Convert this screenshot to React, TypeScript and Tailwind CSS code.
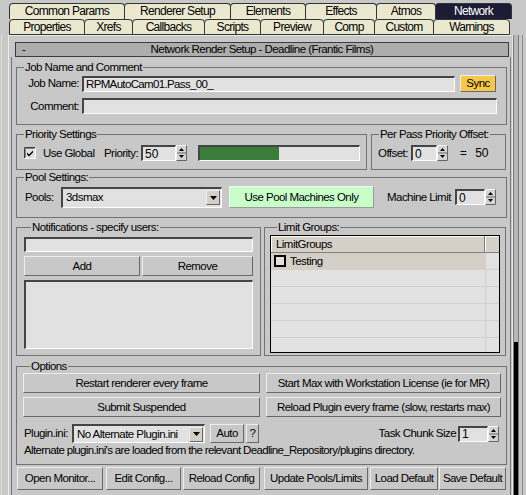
import React from "react";

const sunken =
  "bg-[#e1e1e1] border-t-2 border-l-2 border-t-[#454545] border-l-[#454545] border-b border-r border-b-white border-r-white";
const raised =
  "border border-t-[#ededed] border-l-[#ededed] border-b-[#686868] border-r-[#686868]";

const tabsTop = [
  { label: "Common Params", w: "w-[116px]" },
  { label: "Renderer Setup", w: "w-[107px]" },
  { label: "Elements", w: "w-[76px]" },
  { label: "Effects", w: "w-[72px]" },
  { label: "Atmos", w: "w-[60px]" },
  { label: "Network", w: "w-[77px]", active: true },
];

const tabsBottom = [
  { label: "Properties", w: "w-[76px]" },
  { label: "Xrefs", w: "w-[49px]" },
  { label: "Callbacks", w: "w-[73px]" },
  { label: "Scripts", w: "w-[57px]" },
  { label: "Preview", w: "w-[64px]" },
  { label: "Comp", w: "w-[52px]" },
  { label: "Custom", w: "w-[60px]" },
  { label: "Warnings", w: "w-[77px]" },
];

type TabProps = { label: string; w: string; active?: boolean; bottom?: boolean };

function Tab({ label, w, active, bottom }: TabProps) {
  return (
    <div
      className={`${w} h-[16px] flex items-center justify-center rounded-t-[4px] border-l border-t border-r border-[#333333] -mr-px ${
        bottom ? "border-b" : ""
      } ${active ? "bg-[#1c1c36] text-white" : "bg-[#ebe8d0] text-black"} text-[12px] tracking-[-0.7px]`}
    >
      {label}
    </div>
  );
}

function Arrows() {
  return (
    <svg width="11" height="16" viewBox="0 0 11 16" className="block shrink-0">
      <rect x="0" y="0" width="11" height="16" fill="#d4d4d4" />
      <path d="M0.5 15.5V0.5H10.5" stroke="#f4f4f4" fill="none" />
      <path d="M0.5 15.5H10.5V0.5" stroke="#666" fill="none" />
      <line x1="1" y1="8" x2="10" y2="8" stroke="#666" />
      <path d="M5.5 3 L8 6 H3 Z" fill="#000" />
      <path d="M3 10 H8 L5.5 13 Z" fill="#000" />
    </svg>
  );
}

function Spinner({ value, inputW }: { value: string; inputW: string }) {
  return (
    <div className="flex h-[16px] shrink-0">
      <div className={`${sunken} ${inputW} h-full pl-[2px] flex items-center text-[12px] tracking-normal leading-none`}>
        {value}
      </div>
      <Arrows />
    </div>
  );
}

function DropBtn() {
  return (
    <div className={`w-[14px] h-[15px] bg-[#d4d0c8] ${raised} flex items-center justify-center shrink-0`}>
      <svg width="7" height="4" viewBox="0 0 7 4">
        <path d="M0 0H7L3.5 4Z" fill="#000" />
      </svg>
    </div>
  );
}

function Dropdown({ text, className }: { text: string; className: string }) {
  return (
    <div className={`${sunken} ${className} flex items-center justify-between pl-[3px] pr-[1px] shrink-0 overflow-hidden`}>
      <span>{text}</span>
      <DropBtn />
    </div>
  );
}

function Btn({ children, className }: { children: React.ReactNode; className: string }) {
  return (
    <div className={`bg-[#c8c8c8] ${raised} flex items-center justify-center shrink-0 ${className}`}>
      {children}
    </div>
  );
}

function Group({
  label,
  className,
  children,
}: {
  label: string;
  className: string;
  children?: React.ReactNode;
}) {
  return (
    <fieldset className={`border border-[#727272] min-w-0 shrink-0 ${className}`}>
      <legend className="ml-[7px] px-[1px] leading-[13px]">{label}</legend>
      {children}
    </fieldset>
  );
}

function CheckBox() {
  return (
    <svg width="12" height="12" viewBox="0 0 12 12" className="block shrink-0">
      <rect x="0" y="0" width="12" height="12" fill="#e1e1e1" />
      <path d="M0.5 11.5V0.5H11.5" stroke="#404040" fill="none" />
      <path d="M1.5 10.5V1.5H10.5" stroke="#808080" fill="none" />
      <path d="M0.5 11.5H11.5V0.5" stroke="#ffffff" fill="none" />
      <path d="M3 5.5 L5 7.5 L9 3.5 V5.5 L5 9.5 L3 7.5 Z" fill="#000" />
    </svg>
  );
}

export default function App() {
  return (
    <div className="relative w-[526px] h-[495px] overflow-hidden bg-[#c8c8c8] text-black font-['Liberation_Sans',Arial,sans-serif] text-[11.5px] leading-[13px] tracking-[-0.55px] whitespace-nowrap">
      {/* tab strip */}
      <div className="pt-[3px] pl-[9px]">
        <div className="flex">
          {tabsTop.map((t) => (
            <Tab key={t.label} {...t} />
          ))}
        </div>
        <div className="flex">
          {tabsBottom.map((t) => (
            <Tab key={t.label} {...t} bottom />
          ))}
        </div>
      </div>

      <div className="flex h-[460px] shadow-[inset_1px_0_0_#c8c8c8,inset_2px_0_0_#e6e2cc]">
        <div className="w-[8px] shrink-0" />
        {/* main panel */}
        <div className="w-[503px] shrink-0 border-l border-t border-[#ececec] pl-[2px] flex flex-col">
          <div className="ml-[4px] mt-[6px] w-[494px] h-[15px] bg-[#adadad] border border-[#3c3c3c] grid grid-cols-[30px_1fr_30px] items-center leading-none">
            <span className="pl-[6px]">-</span>
            <span className="text-center">Network Render Setup - Deadline (Frantic Films)</span>
            <span />
          </div>

          <div className="flex-1 border-l border-r border-[#777777] pl-[4px] flex flex-col">
            {/* job name */}
            <Group label="Job Name and Comment" className="mt-[4px] w-[491px] pb-[10px]">
              <div className="mt-[1px] flex items-center h-[17px]">
                <span className="w-[62px] text-right">Job Name:</span>
                <div className={`${sunken} ml-[3px] w-[373px] h-[16px] flex items-center pl-[2px] tracking-[-0.65px]`}>
                  RPMAutoCam01.Pass_00_
                </div>
                <Btn className="ml-[5px] w-[36px] h-[17px] !bg-[#f5c84c]">Sync</Btn>
              </div>
              <div className="mt-[6px] flex items-center h-[16px]">
                <span className="w-[62px] text-right">Comment:</span>
                <div className={`${sunken} ml-[3px] w-[415px] h-[16px]`} />
              </div>
            </Group>

            {/* priority */}
            <div className="mt-[3px] flex">
              <Group label="Priority Settings" className="w-[351px] pb-[8px]">
                <div className="mt-[4px] flex items-center h-[16px] pl-[7px]">
                  <CheckBox />
                  <span className="w-[68px] pl-[7px]">Use Global</span>
                  <span className="w-[37px]">Priority:</span>
                  <Spinner value="50" inputW="w-[35px]" />
                  <div className={`${sunken} ml-[11px] w-[162px] h-[16px] flex`}>
                    <div className="w-[79px] h-full bg-[#3b7d3b]" />
                  </div>
                </div>
              </Group>
              <Group label="Per Pass Priority Offset:" className="ml-[4px] w-[135px] pb-[8px]">
                <div className="mt-[4px] flex items-center h-[16px] pl-[6px]">
                  <span className="w-[33px]">Offset:</span>
                  <Spinner value="0" inputW="w-[26px]" />
                  <span className="ml-[12px]">=</span>
                  <span className="ml-[9px] text-[12px] tracking-normal">50</span>
                </div>
              </Group>
            </div>

            {/* pools */}
            <Group label="Pool Settings:" className="mt-[1px] w-[491px] pb-[9px]">
              <div className="mt-[2px] flex items-center h-[22px] pl-[8px]">
                <span className="w-[36px]">Pools:</span>
                <Dropdown text="3dsmax" className="w-[161px] h-[21px]" />
                <div className="ml-[7px] w-[145px] h-[22px] bg-[#c8ffc8] border border-t-[#f4f4f4] border-l-[#f4f4f4] border-b-[#9a9a9a] border-r-[#9a9a9a] flex items-center justify-center shrink-0">
                  Use Pool Machines Only
                </div>
                <span className="ml-[13px] w-[68px]">Machine Limit</span>
                <Spinner value="0" inputW="w-[30px]" />
              </div>
            </Group>

            {/* notifications + limit groups */}
            <div className="mt-[3px] flex">
              <Group label="Notifications - specify users:" className="w-[245px] pb-[6px] px-[7px]">
                <div className={`${sunken} mt-[3px] h-[15px]`} />
                <div className="mt-[4px] flex h-[20px]">
                  <Btn className="w-[116px] h-[20px]">Add</Btn>
                  <Btn className="ml-[2px] flex-1 !shrink h-[20px]">Remove</Btn>
                </div>
                <div className={`${sunken} mt-[4px] h-[69px]`} />
              </Group>
              <Group label="Limit Groups:" className="ml-[3px] w-[242px] pb-[2px] px-[5px]">
                <div className="mt-[1px] h-[118px] border border-black bg-[#e1e1e1] overflow-hidden">
                  <div className="flex h-[17px] bg-[#d4d0c8] border-b border-[#808080]">
                    <div className="w-[214px] h-full border-r border-[#808080] pl-[5px] flex items-center shadow-[inset_1px_1px_0_#ffffff]">
                      LimitGroups
                    </div>
                    <div className="flex-1 h-full shadow-[inset_1px_1px_0_#ffffff]" />
                  </div>
                  <div className="flex h-[17px] border-b border-[#d4d0c8]">
                    <div className="w-[214px] h-full bg-[#d4d0c8] flex items-center pl-[3px]">
                      <div className="w-[12px] h-[12px] border-2 border-black bg-[#e1e1e1] shrink-0" />
                      <span className="ml-[4px]">Testing</span>
                    </div>
                    <div className="flex-1 h-full border-l border-[#d4d0c8]" />
                  </div>
                  {[0, 1, 2, 3, 4].map((i) => (
                    <div key={i} className="flex h-[17px] border-b border-[#d4d0c8]">
                      <div className="w-[214px] h-full" />
                      <div className="flex-1 h-full border-l border-[#d4d0c8]" />
                    </div>
                  ))}
                </div>
              </Group>
            </div>

            {/* options */}
            <Group label="Options" className="mt-[4px] w-[491px] pb-[7px] pl-[6px] pr-[5px]">
              <div className="flex">
                <Btn className="w-[237px] h-[20px]">Restart renderer every frame</Btn>
                <Btn className="ml-[6px] w-[235px] h-[20px]">Start Max with Workstation License (ie for MR)</Btn>
              </div>
              <div className="mt-[4px] flex">
                <Btn className="w-[237px] h-[20px]">Submit Suspended</Btn>
                <Btn className="ml-[6px] w-[235px] h-[20px]">Reload Plugin every frame (slow, restarts max)</Btn>
              </div>
              <div className="mt-[7px] flex items-center h-[19px] pr-[2px]">
                <span className="w-[49px] pl-[1px]">Plugin.ini:</span>
                <Dropdown text="No Alternate Plugin.ini" className="w-[133px] h-[19px]" />
                <Btn className="ml-[5px] w-[34px] h-[19px]">Auto</Btn>
                <Btn className="ml-[2px] w-[13px] h-[19px]">?</Btn>
                <span className="ml-auto mr-[2px]">Task Chunk Size</span>
                <Spinner value="1" inputW="w-[30px]" />
              </div>
              <div className="mt-[1px] pl-[1px] h-[13px] tracking-[-0.65px]">
                Alternate plugin.ini's are loaded from the relevant Deadline_Repository/plugins directory.
              </div>
            </Group>

            {/* bottom buttons */}
            <div className="mt-[2px] flex">
              <Btn className="ml-[1px] w-[86px] h-[23px]">Open Monitor...</Btn>
              <Btn className="ml-[3px] w-[75px] h-[23px]">Edit Config...</Btn>
              <Btn className="ml-[2px] w-[77px] h-[23px]">Reload Config</Btn>
              <Btn className="ml-[4px] w-[104px] h-[23px]">Update Pools/Limits</Btn>
              <Btn className="ml-[2px] w-[68px] h-[23px]">Load Default</Btn>
              <Btn className="ml-[1px] w-[67px] h-[23px]">Save Default</Btn>
            </div>
          </div>
        </div>

        {/* scrollbar strip */}
        <div className="w-[15px] shrink-0 flex">
          <div className="w-[2px] border-r border-[#e8e8e8]" />
          <div className="w-[6px] border-l border-r border-[#7a7a7a] bg-[#b8b8b8] flex flex-col justify-end">
            <div className="h-[153px] bg-black" />
          </div>
          <div className="w-[3px]" />
          <div className="w-[1px] bg-[#8a8a8a]" />
        </div>
      </div>
    </div>
  );
}
